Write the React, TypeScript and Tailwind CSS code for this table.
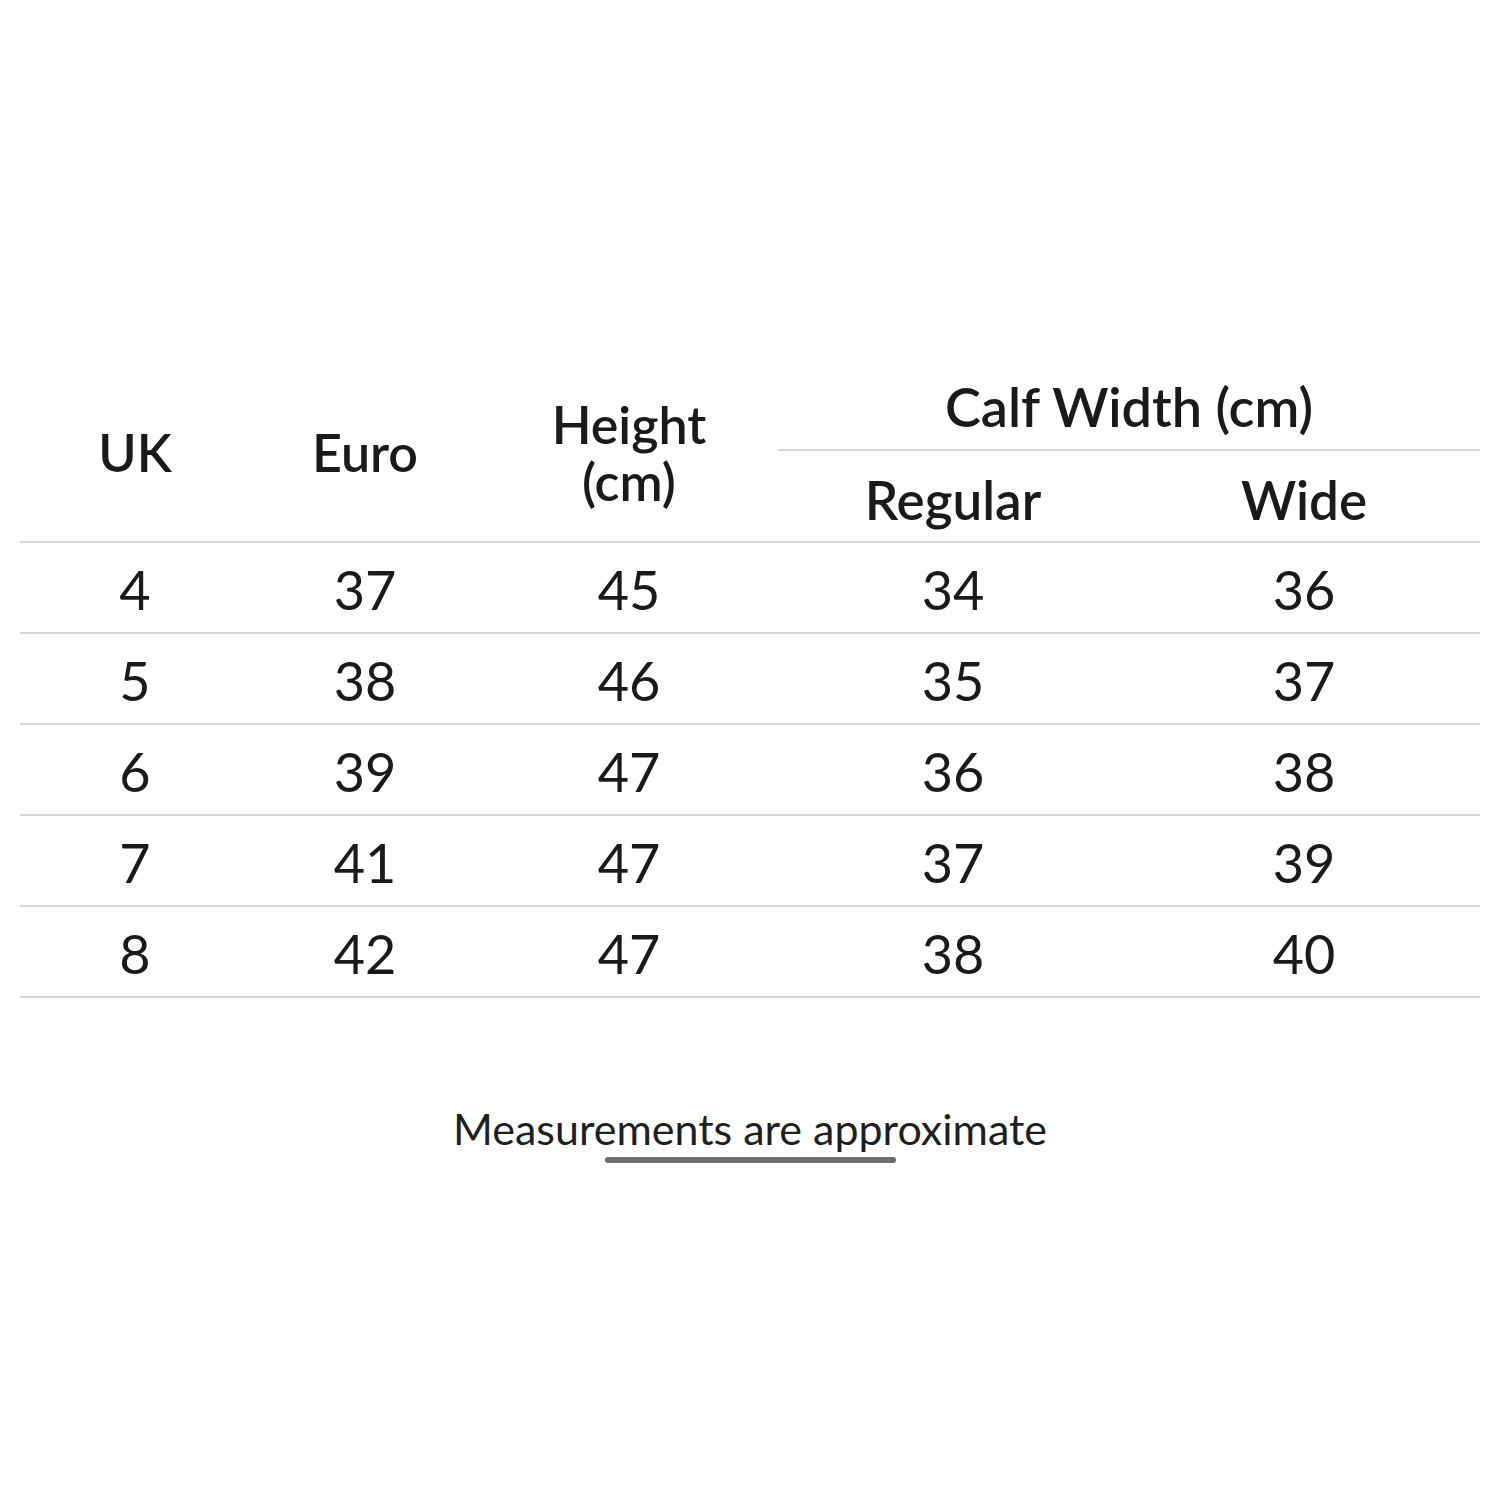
const ROWS = [
  { uk: "4", euro: "37", height: "45", regular: "34", wide: "36" },
  { uk: "5", euro: "38", height: "46", regular: "35", wide: "37" },
  { uk: "6", euro: "39", height: "47", regular: "36", wide: "38" },
  { uk: "7", euro: "41", height: "47", regular: "37", wide: "39" },
  { uk: "8", euro: "42", height: "47", regular: "38", wide: "40" },
];

export default function App() {
  return (
    <div className="w-[1500px] h-[1500px] bg-white text-[#1a1a1a] font-['Lato','Noto_Sans',sans-serif] pt-[364px]">
      <table className="ml-[20px] w-[1460px] table-fixed border-collapse">
        <colgroup>
          <col className="w-[230px]" />
          <col className="w-[230px]" />
          <col className="w-[298px]" />
          <col className="w-[350px]" />
          <col className="w-[352px]" />
        </colgroup>
        <thead>
          <tr className="h-[86px]">
            <th rowSpan={2} className="text-[52px] font-semibold leading-[57px] text-center align-middle border-b-2 border-[#d6d6d6]">
              UK
            </th>
            <th rowSpan={2} className="text-[52px] font-semibold leading-[57px] text-center align-middle border-b-2 border-[#d6d6d6]">
              Euro
            </th>
            <th rowSpan={2} className="text-[52px] font-semibold leading-[57px] text-center align-middle border-b-2 border-[#d6d6d6]">
              Height
              <br />
              (cm)
            </th>
            <th colSpan={2} className="text-[54px] font-semibold leading-[57px] text-center align-middle border-b-2 border-[#d6d6d6]">
              Calf Width (cm)
            </th>
          </tr>
          <tr className="h-[92px]">
            <th className="text-[53px] font-semibold leading-[57px] pt-[6px] text-center align-middle border-b-2 border-[#d6d6d6]">
              Regular
            </th>
            <th className="text-[53px] font-semibold leading-[57px] pt-[6px] text-center align-middle border-b-2 border-[#d6d6d6]">
              Wide
            </th>
          </tr>
        </thead>
        <tbody>
          {ROWS.map((r) => (
            <tr key={r.uk} className="h-[91px] border-b-2 border-[#d6d6d6] text-[54px] leading-none text-center">
              <td className="pt-[4px]">{r.uk}</td>
              <td className="pt-[4px]">{r.euro}</td>
              <td className="pt-[4px]">{r.height}</td>
              <td className="pt-[4px]">{r.regular}</td>
              <td className="pt-[4px]">{r.wide}</td>
            </tr>
          ))}
        </tbody>
      </table>

      <div className="mt-[103px] flex flex-col items-center">
        <p className="text-[43px] leading-[56px] text-[#1f1f1f]">Measurements are approximate</p>
        <div className="mt-[0px] ml-[0px] w-[291px] h-[6px] rounded-full bg-[#6e6e6e]" />
      </div>
    </div>
  );
}
